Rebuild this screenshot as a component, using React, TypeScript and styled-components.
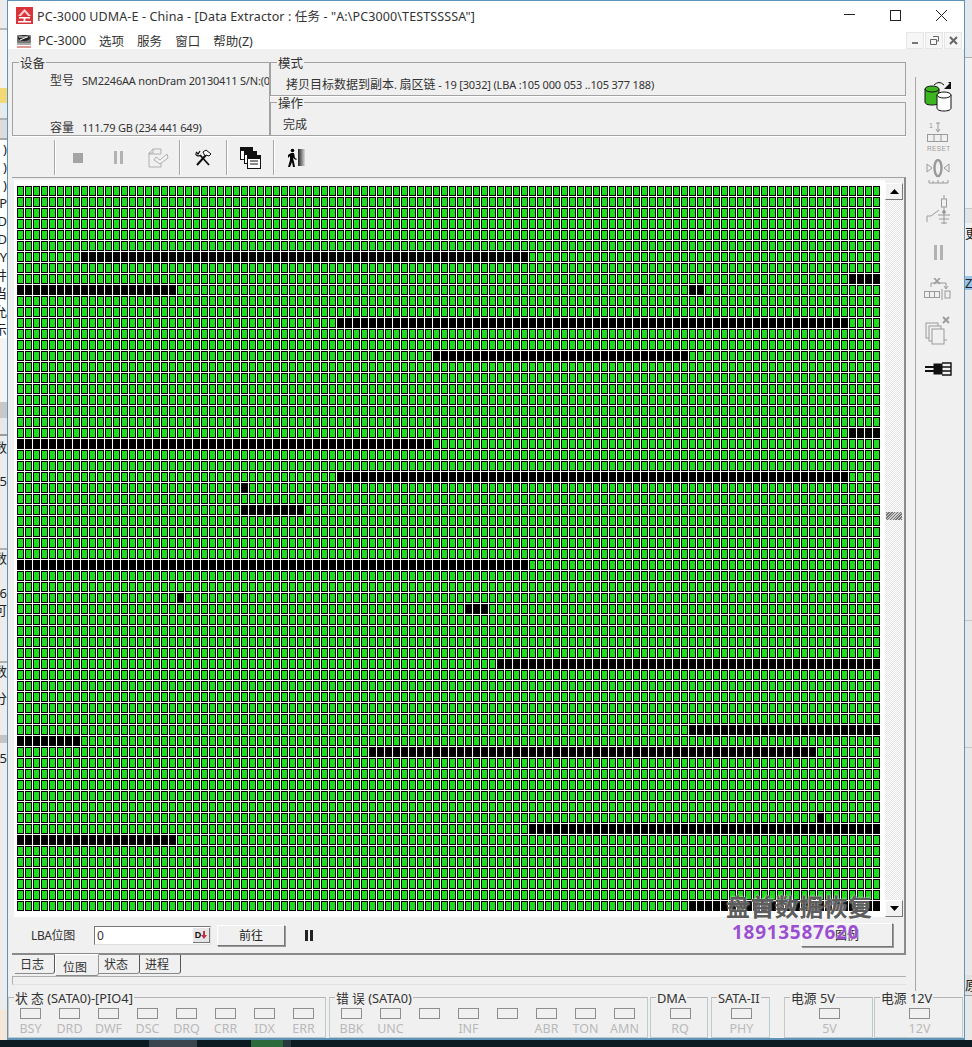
import React from "react";
import styled, { createGlobalStyle } from "styled-components";

const Global = createGlobalStyle`
  html, body { margin: 0; padding: 0; width: 972px; height: 1047px; overflow: hidden; background: #0c1a22; }
  #root { width: 972px; height: 1047px; }
  * { box-sizing: border-box; }
`;

const UI = `"Noto Sans", "Noto Sans CJK SC", sans-serif`;

const Page = styled.div`
  width: 972px; height: 1047px; display: grid; grid-template-rows: 1040px 7px;
  font-family: ${UI}; color: #222; font-size: 12px;
`;
const Desktop = styled.div`display: grid; grid-template-columns: 7px 958px 7px; height: 1040px; overflow: hidden;`;

const Strip = styled.div`display: flex; flex-direction: column; overflow: hidden; background: #efefef;`;
const StripRow = styled.div<{ $h: number; $bg?: string; $align?: string }>`
  height: ${p => p.$h}px; flex: none; background: ${p => p.$bg || "transparent"};
  display: flex; align-items: center; justify-content: ${p => p.$align || "flex-end"};
  font-size: 13px; line-height: 1; color: #222; white-space: nowrap; overflow: hidden;
`;

const Win = styled.div`
  position: relative; display: flex; flex-direction: column; height: 1040px; background: #f0f0f0;
  border: 1px solid #5f93b8; border-bottom-width: 2px;
`;
const TitleBar = styled.div`
  height: 27px; flex: none; background: #fff; display: flex; align-items: center; padding: 1px 0 0 8px;
  font-size: 12.5px; letter-spacing: .12px;
`;
const TitleText = styled.div`flex: 1; white-space: nowrap; color: #333; margin-left: 4px;`;
const WinCtl = styled.div`width: 46px; display: flex; justify-content: center; align-items: center; height: 26px;`;
const MenuBar = styled.div`
  height: 21px; flex: none; background: #fff; display: flex; align-items: center; padding: 3px 0 0 8px; font-size: 12.5px; color: #333;
`;
const MenuIcon = styled.div`width: 22px; display: flex;`;
const MenuItem = styled.div`margin-right: 13px; white-space: nowrap;`;
const MdiBtns = styled.div`margin-left: auto; display: flex; gap: 1px; padding-right: 2px; align-self: flex-end;`;
const MdiBtn = styled.div`
  width: 18px; height: 17px; background: #f6f6f6; border: 1px solid #e6e6e6; display: flex; align-items: center; justify-content: center;
`;

const Upper = styled.div`display: grid; grid-template-columns: 907px 1fr; height: 946px; flex: none;`;
const Main = styled.div`padding: 13px 0 0 4px; width: 907px; display: flex; flex-direction: column;`;
const Info = styled.div`
  display: grid; grid-template-columns: 258px 636px; grid-template-rows: 34px 34px; row-gap: 6px; height: 74px; flex: none;
`;
const Group = styled.div`
  position: relative; border: 1px solid #a2a2a2; box-shadow: 0 1px 0 #fff;
`;
const DeviceGroup = styled(Group)`
  grid-row: 1 / 3; padding: 10px 0 0 37px; display: flex; flex-direction: column; gap: 32px; overflow: visible;
`;
const Caption = styled.div`
  position: absolute; left: 6px; top: -6px; background: #f0f0f0; padding: 0 1px; font-size: 12.5px; line-height: 14px; color: #333; white-space: nowrap;
`;
const DevRow = styled.div`display: flex; gap: 8px; white-space: nowrap; overflow: hidden; font-size: 11px; line-height: 16px; color: #333; letter-spacing: -.2px;`;
const DevKey = styled.span`font-size: 12px; letter-spacing: 0;`;
const ModeText = styled.div`padding: 14px 0 0 15px; font-size: 11px; line-height: 16px; white-space: nowrap; color: #333; letter-spacing: -.16px;`;
const Cjk = styled.span`font-size: 12px; letter-spacing: 0;`;
const OpText = styled.div`padding: 14px 0 0 12px; font-size: 12px; line-height: 16px; color: #333;`;

const ToolBar = styled.div`height: 41px; flex: none; display: flex; padding: 4px 0 2px 42px; align-items: stretch;`;
const ToolGroup = styled.div<{ $w: number }>`
  width: ${p => p.$w}px; border-left: 1px solid #a8a8a8; box-shadow: inset 1px 0 0 #fff; display: flex; align-items: center; padding-left: 3px;
`;
const ToolBtn = styled.div<{ $w?: number }>`width: ${p => p.$w || 40}px; display: flex; justify-content: center; align-items: center;`;

const MapPanel = styled.div`
  position: relative; height: 778px; flex: none; width: 894px; background: #f0f0f0;
  border-top: 1px solid #a2a2a2; border-right: 2px solid #8a8a8a; border-bottom: 2px solid #8a8a8a;
  padding: 2px 0 0 2px; display: flex; flex-direction: column;
`;
const MapRow = styled.div`display: flex; height: 737px; flex: none;`;
const MapArea = styled.div`width: 871px; height: 737px; background: #fff; padding: 6px 0 0 3px;`;
const Cells = styled.div`display: grid; grid-template-columns: repeat(108, 8px); grid-auto-rows: 11px;`;
const Cell = styled.div<{ $off: boolean }>`
  width: 7px; height: 10px; background: ${p => (p.$off ? "#000" : "#20dc20")}; border: 1px solid #000;
`;
const Scroll = styled.div`
  width: 18px; height: 734px; margin-top: 3px; display: flex; flex-direction: column; justify-content: space-between; position: relative;
  background: repeating-conic-gradient(#e4e4e4 0 25%, #fff 0 50%) 0 0 / 2px 2px;
`;
const ScrollBtn = styled.div`
  width: 18px; height: 17px; background: #f2f2f2; border: 1px solid; border-color: #fff #777 #777 #fff; display: flex; align-items: center; justify-content: center;
`;
const ScrollThumb = styled.div`
  position: absolute; left: 1px; top: 329px; width: 16px; height: 8px;
  background: repeating-linear-gradient(135deg, #777 0 1px, #ccc 1px 2px);
`;
const LbaRow = styled.div`flex: 1; display: flex; align-items: center; padding: 0 11px 0 17px; position: relative;`;
const LbaLabel = styled.div`width: 63px; font-size: 12px; color: #333; white-space: nowrap; letter-spacing: -.4px;`;
const LbaInput = styled.div`
  width: 117px; height: 19px; background: #fff; border: 1px solid; border-color: #777 #ddd #ddd #777; display: flex; align-items: center; justify-content: space-between; padding-left: 2px; font-size: 12px; color: #333;
`;
const DIcon = styled.div`
  width: 17px; height: 15px; background: #e6e6e6; border-right: 1px solid #777; border-bottom: 1px solid #777; display: flex; align-items: center; justify-content: center; font-size: 9px; font-weight: 700; font-family: "Liberation Sans", sans-serif; color: #111;
`;
const RaisedBtn = styled.div<{ $w: number; $h: number }>`
  width: ${p => p.$w}px; height: ${p => p.$h}px; flex: none; background: #f0f0f0; border: 1px solid; border-color: #fff #777 #777 #fff; box-shadow: 1px 1px 0 #999;
  display: flex; align-items: center; justify-content: center; font-size: 12px; color: #222;
`;
const GoBtn = styled(RaisedBtn)`margin-left: 6px;`;
const PauseSlot = styled.div`margin-left: 20px; display: flex;`;
const LegendBtn = styled(RaisedBtn)`margin-left: auto;`;

const Watermark = styled.div`
  position: absolute; left: 714px; top: 714px; width: 150px; font-size: 24px; font-weight: 700; line-height: 30px; color: #5d5d5d; white-space: nowrap;
  text-shadow: 0 0 2px #fff; letter-spacing: .4px; pointer-events: none;
`;
const Phone = styled.div`
  position: absolute; left: 720px; top: 742px; font-size: 19px; font-weight: 700; line-height: 24px; color: #9a4fd2; white-space: nowrap; text-shadow: 0 0 1px #fff; letter-spacing: .7px; pointer-events: none; font-family: "Open Sans", sans-serif;
`;

const Tabs = styled.div`height: 21px; flex: none; display: flex; align-items: flex-start; padding-left: 3px; position: relative;`;
const Tab = styled.div<{ $w: number; $active?: boolean }>`
  width: ${p => p.$w}px; height: ${p => (p.$active ? 22 : 19)}px; margin-top: ${p => (p.$active ? -1 : 0)}px; font-size: 12px; line-height: 18px; padding-left: ${p => (p.$active ? 7 : 5)}px; padding-top: ${p => (p.$active ? 4 : 1)}px; color: #333;
  background: #f0f0f0; border-bottom: 1px solid #8a8a8a; border-right: 1px solid ${p => (p.$active ? "#999" : "#555")}; border-radius: 0 0 3px 0;
  ${p => p.$active ? "border-left: 1px solid #fff; border-top: 1px solid #fff;" : ""}
`;
const Rule = styled.div`
  height: 9px; flex: none; width: 894px; border-top: 1px solid #b0b0b0; border-bottom: 1px solid #e0e0e0; border-left: 1px solid #b0b0b0;
`;

const Side = styled.div`display: flex; padding-top: 28px; height: 946px;`;
const SideColumn = styled.div`
  flex: 1; border-left: 1px solid #a8a8a8; display: flex; flex-direction: column; align-items: center; padding: 0 4px 0 0;
`;
const SideIcon = styled.div<{ $gap: number }>`margin-top: ${p => p.$gap}px; display: flex;`;

const StatusRow = styled.div`display: flex; margin-top: 2px; height: 40px; flex: none;`;
const StatusGroup = styled.div<{ $w: number; $ml?: number }>`
  position: relative; width: ${p => p.$w}px; margin-left: ${p => p.$ml ?? 3}px; height: 41px; display: flex; padding: 10px 0 0 2px;
  border: 1px solid #bccad2; border-left-color: #c8c8c8; border-top-color: #b4b4b4; justify-content: ${p => (p.$w < 100 ? "center" : "flex-start")};
`;
const StatusCap = styled.div`
  position: absolute; left: 5px; top: -7px; background: #f0f0f0; padding: 0 1px; font-size: 12.8px; line-height: 14px; color: #333; white-space: nowrap;
`;
const LedCol = styled.div`width: 39px; display: flex; flex-direction: column; align-items: center;`;
const Led = styled.div`width: 21px; height: 11px; border: 1px solid #8e8e8e; background: #f0f0f0; flex: none;`;
const LedLabel = styled.div`font-size: 12.5px; line-height: 15px; height: 15px; margin-top: 2px; color: #b9b9b9; white-space: nowrap;`;

const TaskBar = styled.div`height: 7px; display: flex; background: #0c1a22;`;
const TaskSeg = styled.div<{ $w: number; $bg: string }>`width: ${p => p.$w}px; background: ${p => p.$bg};`;

const COLS = 108, ROWS = 66;
const BLACK: [number, number, number][] = [
  [6, 8, 63], [8, 104, 107], [9, 0, 19], [9, 84, 85], [12, 40, 103], [15, 52, 83], [22, 104, 107], [23, 0, 51],
  [26, 40, 103], [27, 28, 28], [29, 28, 35], [34, 0, 63], [37, 20, 20], [38, 56, 58], [43, 60, 107], [49, 84, 107],
  [50, 0, 7], [51, 44, 99], [57, 100, 100], [58, 64, 107], [59, 0, 19], [65, 84, 107],
];
const isOff = (r: number, c: number) => BLACK.some(([row, a, b]) => row === r && c >= a && c <= b);
const cellList = Array.from({ length: ROWS * COLS }, (_, i) => isOff(Math.floor(i / COLS), i % COLS));

const E = "#ececec";
const LEFT: { h: number; bg?: string; t?: string }[] = [
  { h: 28, bg: E }, { h: 2, bg: "#b9b9b9" }, { h: 58, bg: "#f2f2f2" }, { h: 15, bg: "#f3d878" }, { h: 15, bg: "#e4eaee" },
  { h: 2, bg: "#b0b0b0" }, { h: 18, bg: "#dcdcdc" }, { h: 2, bg: "#a8a8a8" },
  { h: 18, bg: "#fff", t: ")" }, { h: 18, bg: "#fff", t: ")" }, { h: 18, bg: "#fff", t: ")" }, { h: 18, bg: "#fff", t: "P" }, { h: 18, bg: "#fff", t: "D" },
  { h: 18, bg: "#fff", t: "D" }, { h: 18, bg: "#fff", t: "Y" }, { h: 18, bg: "#fff", t: "井" }, { h: 18, bg: "#fff", t: "当" }, { h: 18, bg: "#fff", t: "允" }, { h: 18, bg: "#fff", t: "示" },
  { h: 64, bg: "#f4f4f4" }, { h: 16, bg: "#c8c8c8" }, { h: 16, bg: "#e8e8e8" }, { h: 2, bg: "#9a9a9a" }, { h: 22, bg: E, t: "数" }, { h: 14, bg: E }, { h: 18, bg: E, t: "5" },
  { h: 58, bg: E }, { h: 2, bg: "#b0b0b0" }, { h: 16, bg: E, t: "数" }, { h: 18, bg: E }, { h: 18, bg: E, t: "6" }, { h: 17, bg: E, t: "可" },
  { h: 42, bg: E }, { h: 2, bg: "#b0b0b0" }, { h: 16, bg: E, t: "数" }, { h: 10, bg: E }, { h: 18, bg: E, t: "分" }, { h: 28, bg: E },
  { h: 8, bg: "#c4c4c4" }, { h: 6, bg: E }, { h: 18, bg: E, t: "5" }, { h: 243, bg: E }, { h: 30, bg: "#f6e6d8" },
];
const RIGHT: { h: number; bg?: string; t?: string }[] = [
  { h: 57, bg: "#e4e8ec" }, { h: 1, bg: "#b0b0b0" }, { h: 150, bg: "#f0f0f0" }, { h: 1, bg: "#c8c8c8" }, { h: 14, bg: "#e4e4e4" }, { h: 20, bg: "#f0f0f0", t: "更" }, { h: 33, bg: "#f0f0f0" },
  { h: 14, bg: "#9cc3e6", t: "Z" }, { h: 330, bg: "#e8e8e8" }, { h: 1, bg: "#c8c8c8" }, { h: 126, bg: "#e8e8e8" }, { h: 1, bg: "#c8c8c8" }, { h: 227, bg: "#e8e8e8" },
  { h: 20, bg: "#e0e0e0", t: "原" }, { h: 1, bg: "#a0a0a0" }, { h: 44, bg: "#e8e8e8" },
];

const Logo = () => (
  <svg width="17" height="17" viewBox="0 0 17 17">
    <rect width="17" height="17" fill="#d8343a" />
    <path d="M8.500 2 L15 9 H2 Z" fill="#f4d0d0" /><path d="M8.500 5 L12 9 H5 Z" fill="#d8343a" />
    <rect x="3" y="10" width="11" height="1.500" fill="#fff" /><rect x="7.600" y="10" width="1.800" height="5" fill="#fff" /><rect x="2" y="14" width="13" height="1.500" fill="#fff" />
  </svg>
);
const MenuHdd = () => (
  <svg width="16" height="16" viewBox="0 0 16 16">
    <rect x="1" y="3" width="14" height="8" rx="1" fill="#777" /><ellipse cx="8" cy="6" rx="6" ry="3" fill="#222" />
    <path d="M3 5h9M4 8l7-3" stroke="#fff" strokeWidth="1" /><rect x="1" y="11" width="14" height="2" fill="#aaa" /><path d="M1 15h14" stroke="#c0392b" strokeWidth="1" />
  </svg>
);
const Pause = ({ c = "#b2b2b2", h = 13, w = 9 }: { c?: string; h?: number; w?: number }) => (
  <svg width={w} height={h} viewBox={`0 0 ${w} ${h}`}><rect width="3" height={h} fill={c} /><rect x={w - 3} width="3" height={h} fill={c} /></svg>
);
const DocCheck = () => (
  <svg width="22" height="20" viewBox="0 0 22 20" fill="#f2f2f2" stroke="#b0b0b0" strokeWidth="1">
    <path d="M2 5l4-4h8v5H2zM2 5v14h12v-5" fill="none" /><path d="M6 1v4H2" fill="none" />
    <path d="M9 9l4 3 7-6 1 4-8 6-6-4z" />
  </svg>
);
const Tools = () => (
  <svg width="18" height="18" viewBox="0 0 18 18" fill="none" stroke="#111">
    <path d="M3 16L12 6" strokeWidth="2" /><path d="M9 3l3-2 5 4-2 2-3-1-1 1z" fill="#fff" strokeWidth="1" />
    <path d="M15 16L6 6" strokeWidth="1.800" /><path d="M1.500 4.500A3 3 0 0 0 6 6.500M2 3l2 2 2-3" strokeWidth="1.300" />
  </svg>
);
const WinStack = () => (
  <svg width="21" height="22" viewBox="0 0 21 22" fill="#fff" stroke="#111">
    <rect x=".5" y=".5" width="12" height="12" /><rect x=".5" y=".5" width="12" height="3" fill="#111" />
    <rect x="4.500" y="4.500" width="12" height="12" /><rect x="4.500" y="4.500" width="12" height="3" fill="#111" />
    <rect x="7.500" y="8.500" width="13" height="13" /><rect x="7.500" y="8.500" width="13" height="3" fill="#111" />
    <path d="M10 14h8M10 17h8" strokeWidth="1" />
  </svg>
);
const Runner = () => (
  <svg width="20" height="20" viewBox="0 0 20 20">
    <defs><linearGradient id="fade" x1="0" x2="1"><stop offset="0" stopColor="#222" /><stop offset="1" stopColor="#ddd" /></linearGradient></defs>
    <rect x="11" y="1" width="7" height="17" fill="url(#fade)" />
    <circle cx="5.500" cy="2.500" r="1.800" fill="#000" />
    <path d="M4 5h3l1 5 2 1-1 1-3-2 1 4 1 5H6l-1-5-2 5H1l2-7V8L1 10V7z" fill="#000" />
  </svg>
);
const Db = ({ x, y, fill }: { x: number; y: number; fill: string }) => (
  <g transform={`translate(${x} ${y})`} stroke="#111" strokeWidth="1" fill={fill}>
    <path d="M0 3v13c0 2 3 3 7 3s7-1 7-3V3" /><ellipse cx="7" cy="3" rx="7" ry="3" />
  </g>
);
const Copier = () => (
  <svg width="28" height="31" viewBox="0 0 28 31">
    <Db x={1} y={5} fill="#3db51e" />
    <path d="M10 4q5-5 10 0" fill="none" stroke="#111" />
    <path d="M20 8l7-7v7z M24 1l3 0 0 3" fill="#111" />
    <Db x={13} y={11} fill="#fff" />
  </svg>
);
const G = "#9a9a9a";
const ResetIcon = () => (
  <svg width="24" height="30" viewBox="0 0 24 30" fill="none" stroke={G}>
    <text x="3" y="6" fontSize="7" fill={G} stroke="none" fontFamily="Liberation Sans">1</text>
    <path d="M10 1h4M12 1v9M10 7l2 3 2-3" />
    <rect x="1.500" y="12.500" width="20" height="7" /><path d="M8 12v8M15 12v8" />
    <text x="1" y="29" fontSize="6.500" fill={G} stroke="none" letterSpacing=".4" fontFamily="Liberation Sans">RESET</text>
  </svg>
);
const ZeroIcon = () => (
  <svg width="24" height="28" viewBox="0 0 24 28" fill="none" stroke={G}>
    <path d="M1 5l5 4-5 4zM23 5l-5 4 5 4z" /><ellipse cx="12" cy="9" rx="3.500" ry="8" strokeWidth="2.400" />
    <path d="M3 21v3h19v-3M7 22v2M12 21v3M17 22v2" />
  </svg>
);
const SwitchIcon = () => (
  <svg width="24" height="36" viewBox="0 0 24 36" fill="none" stroke={G}>
    <rect x="15.500" y="4" width="5" height="8" /><path d="M18 0v4M18 12v17M12 20h12M13 24h10M15 28h6" />
    <path d="M1 27v-6h4l8-6" /><circle cx="18" cy="17" r="1.400" fill={G} />
  </svg>
);
const BitsIcon = () => (
  <svg width="28" height="24" viewBox="0 0 28 24" fill="none" stroke={G}>
    <path d="M7 9V5h15M22 5v5M20 8l2 3 2-3" /><path d="M10 0l6 6M16 0l-6 6" strokeWidth="1.600" />
    <rect x=".5" y="13.500" width="15" height="6" /><path d="M5.500 13v7M10.500 13v7M18 11v11" /><rect x="21" y="13" width="5" height="7" />
  </svg>
);
const CopyX = () => (
  <svg width="26" height="30" viewBox="0 0 26 30" fill="#f0f0f0" stroke={G}>
    <rect x="1" y="7" width="12" height="15" /><rect x="4" y="10" width="12" height="15" /><rect x="7" y="13" width="12" height="15" />
    <path d="M19 24h3" /><path d="M18 1l6 6M24 1l-6 6" strokeWidth="1.800" />
  </svg>
);
const Plug = () => (
  <svg width="27" height="14" viewBox="0 0 27 14" fill="#111" stroke="#111">
    <path d="M0 5h11M0 9h11" strokeWidth="2" /><rect x="9" y="2" width="8" height="10" />
    <path d="M17 1h9v12h-9M17 5h9M17 9h9" fill="none" strokeWidth="1.400" />
  </svg>
);

const STATUS = ["BSY", "DRD", "DWF", "DSC", "DRQ", "CRR", "IDX", "ERR"];
const ERRORS = ["BBK", "UNC", "", "INF", "", "ABR", "TON", "AMN"];
const LedItem = ({ t }: { t: string }) => <LedCol><Led /><LedLabel>{t}</LedLabel></LedCol>;

export default function App() {
  return (
    <Page>
      <Global />
      <Desktop>
        <Strip>{LEFT.map((r, i) => <StripRow key={i} $h={r.h} $bg={r.bg}>{r.t}</StripRow>)}</Strip>
        <Win>
          <TitleBar>
            <Logo />
            <TitleText>PC-3000 UDMA-E - China - [Data Extractor : 任务 - "A:\PC3000\TESTSSSSA"]</TitleText>
            <WinCtl><svg width="11" height="2"><rect width="11" height="1" fill="#222" /></svg></WinCtl>
            <WinCtl><svg width="11" height="11"><rect x=".5" y=".5" width="10" height="10" fill="none" stroke="#222" /></svg></WinCtl>
            <WinCtl><svg width="11" height="11"><path d="M0 0l11 11M11 0L0 11" stroke="#222" /></svg></WinCtl>
          </TitleBar>
          <MenuBar>
            <MenuIcon><MenuHdd /></MenuIcon>
            <MenuItem>PC-3000</MenuItem>
            <MenuItem>选项</MenuItem>
            <MenuItem>服务</MenuItem>
            <MenuItem>窗口</MenuItem>
            <MenuItem>帮助(Z)</MenuItem>
            <MdiBtns>
              <MdiBtn><svg width="7" height="7"><rect y="5" width="6" height="2" fill="#777" /></svg></MdiBtn>
              <MdiBtn><svg width="9" height="9" fill="none" stroke="#666"><path d="M3 .5h5.500V5H6.500M.5 3.500h6v5h-6z" /></svg></MdiBtn>
              <MdiBtn><svg width="9" height="9"><path d="M1 1l7 7M8 1L1 8" stroke="#666" strokeWidth="2" /></svg></MdiBtn>
            </MdiBtns>
          </MenuBar>
          <Upper>
            <Main>
              <Info>
                <DeviceGroup>
                  <Caption>设备</Caption>
                  <DevRow><DevKey>型号</DevKey><span>SM2246AA nonDram 20130411 S/N:(0</span></DevRow>
                  <DevRow><DevKey>容量</DevKey><span>111.79 GB (234 441 649)</span></DevRow>
                </DeviceGroup>
                <Group>
                  <Caption>模式</Caption>
                  <ModeText><Cjk>拷贝目标数据到副本</Cjk>. <Cjk>扇区链</Cjk> - 19 [3032] (LBA :105 000 053 ..105 377 188)</ModeText>
                </Group>
                <Group>
                  <Caption>操作</Caption>
                  <OpText>完成</OpText>
                </Group>
              </Info>
              <ToolBar>
                <ToolGroup $w={125}>
                  <ToolBtn><svg width="10" height="10"><rect width="10" height="10" fill="#a4a4a4" /></svg></ToolBtn>
                  <ToolBtn><Pause /></ToolBtn>
                  <ToolBtn><DocCheck /></ToolBtn>
                </ToolGroup>
                <ToolGroup $w={47}><ToolBtn><Tools /></ToolBtn></ToolGroup>
                <ToolGroup $w={47}><ToolBtn><WinStack /></ToolBtn></ToolGroup>
                <ToolGroup $w={47}><ToolBtn><Runner /></ToolBtn></ToolGroup>
              </ToolBar>
              <MapPanel>
                <MapRow>
                  <MapArea>
                    <Cells>{cellList.map((off, i) => <Cell key={i} $off={off} />)}</Cells>
                  </MapArea>
                  <Scroll>
                    <ScrollBtn><svg width="9" height="5"><path d="M4.500 0L9 5H0z" fill="#000" /></svg></ScrollBtn>
                    <ScrollThumb />
                    <ScrollBtn><svg width="9" height="5"><path d="M0 0h9L4.500 5z" fill="#000" /></svg></ScrollBtn>
                  </Scroll>
                </MapRow>
                <LbaRow>
                  <LbaLabel>LBA位图</LbaLabel>
                  <LbaInput>0<DIcon>D<svg width="6" height="8"><path d="M2 0h2v4h2L3 8 0 4h2z" fill="#c0303a" /></svg></DIcon></LbaInput>
                  <GoBtn $w={68} $h={21}>前往</GoBtn>
                  <PauseSlot><Pause c="#222" h={11} w={8} /></PauseSlot>
                  <LegendBtn $w={92} $h={24}>图例</LegendBtn>
                </LbaRow>
                <Watermark>盘首数据恢复</Watermark>
                <Phone>18913587620</Phone>
              </MapPanel>
              <Tabs>
                <Tab $w={40}>日志</Tab>
                <Tab $w={44} $active>位图</Tab>
                <Tab $w={41}>状态</Tab>
                <Tab $w={41}>进程</Tab>
              </Tabs>
              <Rule />
            </Main>
            <Side>
              <SideColumn>
                <SideIcon $gap={4}><Copier /></SideIcon>
                <SideIcon $gap={10}><ResetIcon /></SideIcon>
                <SideIcon $gap={7}><ZeroIcon /></SideIcon>
                <SideIcon $gap={8}><SwitchIcon /></SideIcon>
                <SideIcon $gap={14}><Pause h={15} w={9} /></SideIcon>
                <SideIcon $gap={18}><BitsIcon /></SideIcon>
                <SideIcon $gap={14}><CopyX /></SideIcon>
                <SideIcon $gap={16}><Plug /></SideIcon>
              </SideColumn>
            </Side>
          </Upper>
          <StatusRow>
            <StatusGroup $w={318} $ml={0}><StatusCap>状 态 (SATA0)-[PIO4]</StatusCap>{STATUS.map(s => <LedItem key={s} t={s} />)}</StatusGroup>
            <StatusGroup $w={319}><StatusCap>错 误 (SATA0)</StatusCap>{ERRORS.map((s, i) => <LedItem key={i} t={s} />)}</StatusGroup>
            <StatusGroup $w={58} $ml={2}><StatusCap>DMA</StatusCap><LedItem t="RQ" /></StatusGroup>
            <StatusGroup $w={59}><StatusCap>SATA-II</StatusCap><LedItem t="PHY" /></StatusGroup>
            <StatusGroup $w={89} $ml={14}><StatusCap>电源 5V</StatusCap><LedItem t="5V" /></StatusGroup>
            <StatusGroup $w={89} $ml={1}><StatusCap>电源 12V</StatusCap><LedItem t="12V" /></StatusGroup>
          </StatusRow>
        </Win>
        <Strip>{RIGHT.map((r, i) => <StripRow key={i} $h={r.h} $bg={r.bg} $align="flex-start">{r.t}</StripRow>)}</Strip>
      </Desktop>
      <TaskBar>
        <TaskSeg $w={149} $bg="#0c1a22" /><TaskSeg $w={48} $bg="#3a4550" /><TaskSeg $w={54} $bg="#0c1a22" /><TaskSeg $w={32} $bg="#2c6a3c" /><TaskSeg $w={8} $bg="#2a3640" />
      </TaskBar>
    </Page>
  );
}
